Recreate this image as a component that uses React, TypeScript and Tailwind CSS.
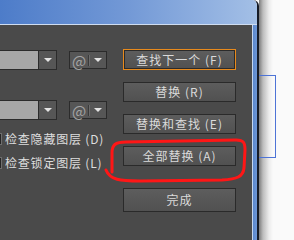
import React from 'react';

const Arrow = () => (
  <span className="block h-0 w-0 border-x-[4px] border-t-[4px] border-x-transparent border-t-[#e4e4e4]" />
);

const FieldRow = () => (
  <div className="flex items-center">
    <div className="flex h-[20px] w-[57px] border-y border-r border-[#2b2b2b]">
      <div className="w-[38px] bg-[#a7a7a7]" />
      <div className="flex flex-1 items-center justify-center border-l border-[#2b2b2b] bg-[#565656]">
        <Arrow />
      </div>
    </div>
    <div className="ml-[12px] flex h-[18px] w-[38px] items-center border border-[#2b2b2b] bg-[#565656]">
      <span className="ml-[2px] w-[13px] text-center text-[15px] leading-none text-[#a4a4a4]">@</span>
      <span className="ml-[3px] h-[11px] w-[2px] border-l border-[#3a3a3a] border-r-[#6c6c6c] border-r" />
      <span className="ml-[4px]">
        <Arrow />
      </span>
    </div>
  </div>
);

const Check = ({ label }: { label: string }) => (
  <div className="flex h-[16px] items-center">
    <span className="-ml-[10px] h-[12px] w-[12px] border border-[#6e6e6e] bg-[#262626]" />
    <span className="ml-[3px] whitespace-nowrap text-[12px] leading-none tracking-[0.8px] text-[#dedede]">{label}</span>
  </div>
);

const Btn = ({ label, className = '' }: { label: string; className?: string }) => (
  <div
    className={`flex items-center justify-center border border-[#2a2a2a] bg-gradient-to-b from-[#5d5d5d] to-[#515151] text-[12px] leading-none tracking-[1px] text-[#dadada] ${className}`}
  >
    {label}
  </div>
);

export default function App() {
  return (
    <div
      className="relative flex h-[240px] w-[294px] overflow-hidden bg-[#fafafa]"
      style={{ fontFamily: '"Noto Sans CJK SC", "Liberation Sans", sans-serif' }}
    >
      {/* window */}
      <div className="flex w-[259px] flex-col overflow-hidden rounded-tr-[6px] border-r-2 border-[#161b26]">
        <div className="h-[25px] border-b border-[#cfddf1] bg-gradient-to-r from-[#4d7cc9] via-[#7399d6] to-[#a3bfe6]" />
        <div className="flex flex-1">
          <div className="flex w-[252px] bg-[#4a4a4a]">
            <div className="flex w-[123px] flex-col pt-[25px]">
              <FieldRow />
              <div className="mt-[30px]">
                <FieldRow />
              </div>
              <div className="mt-[11px] flex flex-col gap-[8px]">
                <Check label="检查隐藏图层 (D)" />
                <Check label="检查锁定图层 (L)" />
              </div>
            </div>
            <div className="flex w-[113px] flex-col pt-[24px]">
              <div className="border border-[#e88a1c]">
                <Btn label="查找下一个 (F)" className="h-[19px]" />
              </div>
              <Btn label="替换 (R)" className="mt-[12px] h-[20px]" />
              <Btn label="替换和查找 (E)" className="mt-[12px] h-[20px]" />
              <Btn label="全部替换 (A)" className="mt-[12px] h-[20px]" />
              <Btn label="完成" className="mt-[22px] h-[24px]" />
            </div>
          </div>
          <div className="w-[5px] border-l border-[#c5d6ee] bg-gradient-to-r from-[#5a87cc] to-[#6e97d6]" />
        </div>
      </div>

      {/* desktop behind */}
      <div className="flex-1 bg-[linear-gradient(to_right,#7c7c7c_0px,#bdbdbd_4px,#ececec_10px,#fafafa_14px)] pt-[75px]">
        <div className="h-[83px] w-[17px] border-y border-r border-[#4e74d6]" />
      </div>

      <svg className="pointer-events-none absolute inset-0" width="294" height="240" viewBox="0 0 294 240">
        <path
          d="M112 172 L112 153 C112 145 115 142 126 142 L236 140 C244 140 245 143 245 150 L244 168 C243 177 237 179 222 180 L140 181 C120 181 110 180 106 170"
          fill="none"
          stroke="#ff1616"
          strokeWidth="3"
          strokeLinecap="round"
          strokeLinejoin="round"
        />
      </svg>
    </div>
  );
}
